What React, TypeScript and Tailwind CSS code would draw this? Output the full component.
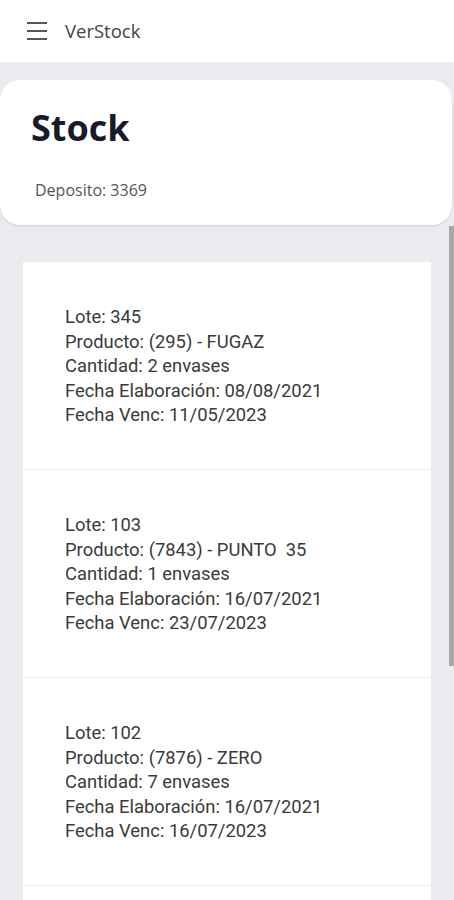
const lotes = [
  { lote: "345", producto: "(295) - FUGAZ", cantidad: 2, elab: "08/08/2021", venc: "11/05/2023" },
  { lote: "103", producto: "(7843) - PUNTO  35", cantidad: 1, elab: "16/07/2021", venc: "23/07/2023" },
  { lote: "102", producto: "(7876) - ZERO", cantidad: 7, elab: "16/07/2021", venc: "16/07/2023" },
];

const Header = () => (
  <header className="h-[62px] bg-white flex items-center px-[27px]">
    <button aria-label="Menu" className="flex flex-col justify-between w-[20px] h-[18px]">
      <span className="block h-[2px] w-full bg-[#555]" />
      <span className="block h-[2px] w-full bg-[#555]" />
      <span className="block h-[2px] w-full bg-[#555]" />
    </button>
    <span className="ml-[18px] text-[18.5px] text-[#444] font-['Open_Sans',sans-serif]">VerStock</span>
  </header>
);

export default function App() {
  return (
    <div className="relative h-[900px] overflow-hidden bg-[#e9ebee] font-['Open_Sans',sans-serif]">
      <Header />
      <div className="pt-[18px] pr-[2px]">
        <div className="bg-white rounded-[20px] h-[145px] shadow-[0_1px_2px_rgba(0,0,0,0.12)] pl-[31px] pt-[26px]">
          <h1 className="text-[36px] leading-[44px] font-bold text-[#161a2b]">Stock</h1>
          <p className="mt-[29px] pl-[4px] text-[16px] leading-[22px] text-[#555]">Deposito: 3369</p>
        </div>
      </div>

      <div className="mt-[37px] mx-[23px] bg-white font-['Roboto',sans-serif] text-[18.4px] leading-[24.6px] text-[#3a3a3a]">
        {lotes.map((l, i) => (
          <div
            key={i}
            className={`pl-[42px] pt-[43px] pb-[41px] ${i > 0 ? "border-t border-[#ececec]" : ""}`}
          >
            <p>Lote: {l.lote}</p>
            <p className="whitespace-pre">Producto: {l.producto}</p>
            <p>Cantidad: {l.cantidad} envases</p>
            <p>Fecha Elaboración: {l.elab}</p>
            <p>Fecha Venc: {l.venc}</p>
          </div>
        ))}
        <div className="h-[40px] border-t border-[#ececec]" />
      </div>

      {/* scrollbar thumb */}
      <div className="absolute right-0 top-[226px] w-[5px] h-[440px] bg-[#a6a6a6]" />
    </div>
  );
}
